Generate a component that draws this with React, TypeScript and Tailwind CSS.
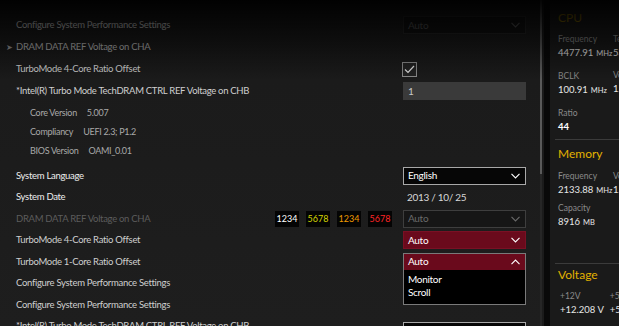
import type { ReactNode } from 'react'

const font = { fontFamily: 'Lato, "Open Sans", sans-serif' }

function Chevron({ up = false, className = '' }: { up?: boolean; className?: string }) {
  return (
    <svg width="9" height="6" viewBox="0 0 9 6" className={className}>
      <path
        d={up ? 'M0.5 5.2 L4.5 1 L8.5 5.2' : 'M0.5 0.8 L4.5 5 L8.5 0.8'}
        fill="none"
        stroke="currentColor"
        strokeWidth="1.1"
      />
    </svg>
  )
}

function Select({
  value,
  tone,
}: {
  value: string
  tone: 'dim' | 'light' | 'disabled' | 'red'
}) {
  const styles = {
    dim: 'border-[#262626] bg-[#121212] text-[#555]',
    light: 'border-[#a8a8a8] bg-[#060606] text-white',
    disabled: 'border-[#3e3e3e] bg-[#161616] text-[#6a6a6a]',
    red: 'border-[#7a1024] bg-[#6a0a1c] text-white',
  }[tone]
  return (
    <div
      className={`flex h-[18px] w-[123px] items-center justify-between border pl-[4px] pr-[5px] text-[10px] ${styles}`}
    >
      <span>{value}</span>
      <Chevron />
    </div>
  )
}

function Row({
  label,
  tone = 'normal',
  children,
}: {
  label: string
  tone?: 'normal' | 'bright' | 'dim'
  children?: ReactNode
}) {
  const color = {
    normal: 'text-[#cfcfcf]',
    bright: 'text-[#ededed]',
    dim: 'text-[#5c5c5c]',
  }[tone]
  return (
    <div className="flex h-[21.5px] items-center pr-[14px]">
      <span className={`flex-1 pl-[16px] text-[9.5px] ${color}`}>{label}</span>
      {children}
    </div>
  )
}

function Info({ label, value }: { label: string; value: string }) {
  return (
    <div className="flex h-[19px] items-center gap-[10px] pl-[30px] text-[9px] text-[#a9a9a9]">
      <span>{label}</span>
      <span>{value}</span>
    </div>
  )
}

function NumBox({ v, c }: { v: string; c: string }) {
  return (
    <div className={`flex h-[16px] w-[24px] items-center justify-center bg-[#040404] text-[9px] ${c}`}>
      {v}
    </div>
  )
}

function Stat({ label, value, unit, strong = false }: { label: string; value: string; unit?: string; strong?: boolean }) {
  return (
    <div className="flex flex-col leading-[14px]">
      <span className="text-[8.5px] text-[#8a8a8a]">{label}</span>
      <span className={`whitespace-nowrap text-[9.5px] ${strong ? 'font-bold text-white' : 'text-[#e6e6e6]'}`}>
        {value}
        {unit && <span className="ml-[3px] text-[7.5px]">{unit}</span>}
      </span>
    </div>
  )
}

function Section({ title, children, top, tint = 'text-[#e2b200]' }: { title: string; children: ReactNode; top: string; tint?: string }) {
  return (
    <div className={`pl-[8px] ${top}`}>
      <div className={`text-[12px] leading-[16px] ${tint}`}>{title}</div>
      {children}
    </div>
  )
}

export default function App() {
  return (
    <div
      className="relative flex h-[326px] w-[619px] overflow-hidden bg-[#1b1b1b]"
      style={font}
    >
      {/* main settings list */}
      <div className="w-[540px] bg-gradient-to-b from-[#1a1a1a] to-[#1e1e1e] pt-[14px] tracking-[-0.3px]">
        <div className="flex h-[22px] items-center pr-[14px]">
          <span className="flex-1 pl-[16px] text-[9.5px] text-[#cfcfcf]">Configure System Performance Settings</span>
          <Select value="Auto" tone="dim" />
        </div>
        <div className="flex h-[22px] items-center text-[9.5px] text-[#b5b5b5]">
          <span className="w-[16px] pl-[6px] text-[8px] text-[#999]">➤</span>
          <span>DRAM DATA REF Voltage on CHA</span>
        </div>
        <div className="flex h-[22px] items-center pr-[14px]">
          <span className="flex-1 pl-[16px] text-[9.5px] text-[#cfcfcf]">TurboMode 4-Core Ratio Offset</span>
          <div className="mr-[109px] flex h-[15px] w-[15px] items-center justify-center border border-[#8a8a8a] bg-[#222]">
            <svg width="11" height="9" viewBox="0 0 11 9">
              <path d="M1 4.5 L4 7.5 L10 1" fill="none" stroke="#e0e0e0" strokeWidth="1.2" />
            </svg>
          </div>
        </div>
        <div className="flex h-[22px] items-center pr-[14px]">
          <span className="flex-1 pl-[16px] text-[9.5px] text-[#cfcfcf]">
            *Intel(R) Turbo Mode TechDRAM CTRL REF Voltage on CHB
          </span>
          <div className="flex h-[18px] w-[123px] items-center bg-[#3a3a3a] pl-[5px] text-[10px] text-[#c8c8c8]">1</div>
        </div>

        <div className="pb-[4.5px] pt-[1.5px]">
          <Info label="Core Version" value="5.007" />
          <Info label="Compliancy" value="UEFI 2.3; P1.2" />
          <Info label="BIOS Version" value="OAMI_0.01" />
        </div>

        <Row label="System Language" tone="bright">
          <Select value="English" tone="light" />
        </Row>
        <Row label="System Date" tone="bright">
          <div className="w-[123px] pl-[4px] text-[10px] text-[#d8d8d8]">2013 / 10/ 25</div>
        </Row>
        <Row label="DRAM DATA REF Voltage on CHA" tone="dim">
          <div className="mr-[11px] flex gap-[7px] tracking-normal">
            <NumBox v="1234" c="text-white" />
            <NumBox v="5678" c="text-[#d6d600]" />
            <NumBox v="1234" c="text-[#f09a00]" />
            <NumBox v="5678" c="text-[#ff2424]" />
          </div>
          <Select value="Auto" tone="disabled" />
        </Row>
        <Row label="TurboMode 4-Core Ratio Offset">
          <Select value="Auto" tone="red" />
        </Row>
        <Row label="TurboMode 1-Core Ratio Offset">
          <div className="relative h-[18px] w-[123px]">
            <div className="absolute left-0 top-0 z-10 w-[123px] border border-[#7a7a7a] bg-black text-[10px] text-white">
              <div className="flex h-[16px] items-center justify-between bg-[#6a0a1c] pl-[4px] pr-[5px]">
                <span>Auto</span>
                <Chevron up />
              </div>
              <div className="pb-[5px] pl-[4px] pt-[3px] leading-[13px]">
                <div>Monitor</div>
                <div>Scroll</div>
              </div>
            </div>
          </div>
        </Row>
        <Row label="Configure System Performance Settings" />
        <Row label="Configure System Performance Settings" />
        <Row label="*Intel(R) Turbo Mode TechDRAM CTRL REF Voltage on CHB">
          <div className="mt-[10px]">
            <Select value="Auto" tone="light" />
          </div>
        </Row>
      </div>

      {/* scrollbar */}
      <div className="flex w-[4px] flex-col">
        <div className="h-[174px] w-[2px] bg-[#5a5a5a]" />
        <div className="w-[2px] flex-1 bg-[#262626]" />
      </div>
      <div className="w-[6px] bg-[#090909]" />

      {/* hardware monitor */}
      <div className="flex-1 overflow-hidden bg-[#1a1a1a] pt-[10px]">
        <Section title="CPU" top="" tint="text-[#8a6c00]">
          <div className="mt-[6px] flex gap-[6px]">
            <div className="flex w-[49px] flex-col gap-[8px]">
              <Stat label="Frequency" value="4477.91" unit="MHz" />
              <Stat label="BCLK" value="100.91" unit="MHz" />
              <Stat label="Ratio" value="44" strong />
            </div>
            <div className="flex flex-col gap-[8px]">
              <Stat label="Temperature" value="53 °C" />
              <Stat label="Vcore" value="1.072 V" />
            </div>
          </div>
        </Section>
        <div className="ml-[5px] mt-[5px] h-px bg-[#3b3b3b]" />
        <Section title="Memory" top="pt-[6px]">
          <div className="mt-[7px] flex gap-[6px]">
            <div className="flex w-[49px] flex-col gap-[3px]">
              <Stat label="Frequency" value="2133.88" unit="MHz" />
              <Stat label="Capacity" value="8916" unit="MB" />
            </div>
            <div className="flex flex-col">
              <Stat label="Voltage" value="1.600 V" />
            </div>
          </div>
        </Section>
        <div className="ml-[5px] mt-[33px] h-px bg-[#3b3b3b]" />
        <Section title="Voltage" top="pt-[3px]">
          <div className="mt-[6px] flex gap-[6px] pl-[2px]">
            <div className="w-[47px]">
              <Stat label="+12V" value="+12.208 V" />
            </div>
            <Stat label="+5V" value="+5.080 V" />
          </div>
        </Section>
      </div>

      {/* top fade */}
      <div className="pointer-events-none absolute inset-x-0 top-0 h-[80px] bg-gradient-to-b from-black/95 via-black/50 to-transparent" />
    </div>
  )
}
